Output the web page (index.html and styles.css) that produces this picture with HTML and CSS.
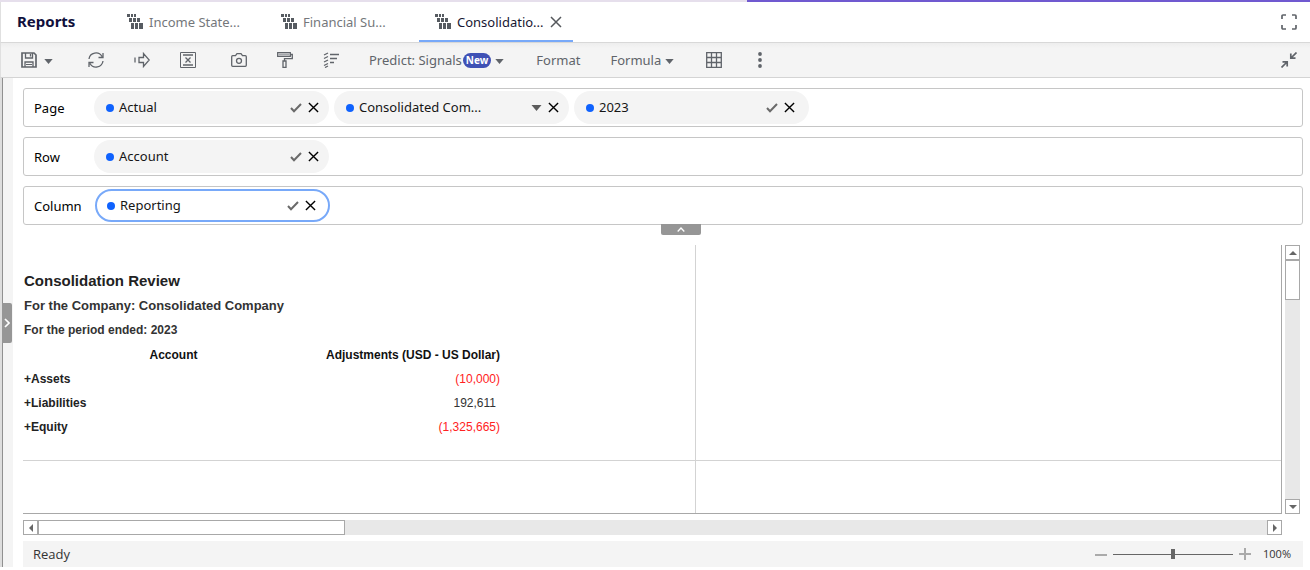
FILE: index.html
```html
<!DOCTYPE html>
<html lang="en">
<head>
<meta charset="utf-8">
<title>Reports</title>
<link rel="stylesheet" href="styles.css">
</head>
<body>
<svg class="defs" aria-hidden="true">
  <symbol id="i-report" viewBox="0 0 16 16"><path fill="currentColor" d="M0 0h3v3H0zM4 0h2v3H4zM7 0h2v3H7zM2 4h3v4H2zM6 4h3v4H6zM10 4h3v4h-3zM4 9h3v6H4zM8 9h3v6H8zM12 9h4v6h-4z"/></symbol>
  <symbol id="i-caret" viewBox="0 0 10 6"><path fill="currentColor" d="M0 0h10L5 6z"/></symbol>
  <symbol id="i-check" viewBox="0 0 12 10"><path fill="none" stroke="currentColor" stroke-width="2" d="M1 5l3 3.2L11 1"/></symbol>
  <symbol id="i-x" viewBox="0 0 12 12"><path fill="none" stroke="currentColor" stroke-width="1.5" d="M1 1l10 10M11 1L1 11"/></symbol>
</svg>
<div class="strip"><span class="strip-fill"></span></div>
<header class="header">
  <h1 class="brand">Reports</h1>
  <nav class="tabs">
    <button class="tab"><svg class="icon"><use href="#i-report"/></svg>Income State...</button>
    <button class="tab"><svg class="icon"><use href="#i-report"/></svg>Financial Su...</button>
    <button class="tab active"><svg class="icon"><use href="#i-report"/></svg>Consolidatio...<svg class="tab-close"><use href="#i-x"/></svg></button>
  </nav>
  <button class="tool end" aria-label="Full screen"><svg class="icon" viewBox="0 0 16 16"><path class="line bold" d="M1 5V2q0-1 1-1h3M11 1h3q1 0 1 1v3M15 11v3q0 1-1 1h-3M5 15H2q-1 0-1-1v-3"/></svg></button>
</header>
<div class="toolbar">
  <button class="tool save" aria-label="Save"><svg class="icon" viewBox="0 0 16 16"><path class="line bold" d="M1 1h12l2 2v12H1z"/><path class="line" d="M4.500 1v5h7V1M4 15V10h8v5M9.500 2v2.500"/><path class="line thin" d="M5 12.500h6"/></svg><svg class="caret"><use href="#i-caret"/></svg></button>
  <button class="tool" aria-label="Refresh"><svg class="icon" viewBox="0 0 16 16"><path class="line" d="M1 7A7 7 0 0 1 14 4.500M15 1v4.500h-4.500M15 9A7 7 0 0 1 2 11.500M1 15v-4.500h4.500"/></svg></button>
  <button class="tool" aria-label="Run"><svg class="icon" viewBox="0 0 16 16"><path class="line" d="M1 5.500v5M5 5.500h4.500V1.500L15.200 8l-5.700 6.500v-4H5z"/></svg></button>
  <button class="tool gap-after" aria-label="Clear sheet"><svg class="icon" viewBox="0 0 16 16"><path class="line thin" d="M.5.5h15v15H.5z"/><path class="line" d="M5.500 5.500l5 5M10.500 5.500l-5 5"/><path class="line bold" d="M3 3h10M3 13h10"/></svg></button>
  <button class="tool" aria-label="Snapshot"><svg class="icon" viewBox="0 0 16 16"><path class="line" d="M1.700 3.700H4.500l1.500-2h4l1.500 2h2.800q1 0 1 1v8.600q0 1-1 1H1.700q-1 0-1-1V4.700q0-1 1-1z"/><circle class="line" cx="8" cy="8.800" r="2.500"/></svg></button>
  <button class="tool" aria-label="Format painter"><svg class="icon" viewBox="0 0 16 16"><path class="line" d="M.7.700h12.600v3.600H.7zM13.300 2.500h2v4.200H7.500V9"/><path fill="#a4a7ab" d="M1.500 1.500h11v2h-11z"/><path class="line" d="M6 9h3v6.300H6z"/></svg></button>
  <button class="tool" aria-label="Sort"><svg class="icon" viewBox="0 0 16 16"><path class="line" d="M1 3l4-2M1 6.500l4-2M1 10l4-2M1 13.500l4-2M2 15.500l3-1.500M7 2.500h9M7 6.500h7M7 10.500h4"/></svg></button>
  <button class="tool">Predict: Signals<span class="badge">New</span><svg class="caret"><use href="#i-caret"/></svg></button>
  <button class="tool">Format</button>
  <button class="tool">Formula<svg class="caret"><use href="#i-caret"/></svg></button>
  <button class="tool" aria-label="Grid"><svg class="icon" viewBox="0 0 16 16"><path class="line" d="M.7.700h14.600v14.600H.7zM.7 5.500h14.600M.7 10.500h14.600M5.500.7v14.600M10.500.7v14.600"/></svg></button>
  <button class="tool" aria-label="More"><svg class="icon" viewBox="0 0 16 16"><g fill="currentColor"><circle cx="8" cy="2" r="1.900"/><circle cx="8" cy="8" r="1.900"/><circle cx="8" cy="14" r="1.900"/></g></svg></button>
  <button class="tool end" aria-label="Collapse"><svg class="icon" viewBox="0 0 16 16"><path class="line bold" d="M15.500.5L10 6M9.800 1.500V6.200h4.700M.5 15.500L6 10M1.500 9.800H6.200v4.700"/></svg></button>
</div>
<div class="body">
  <aside class="rail"><button class="rail-handle" aria-label="Expand panel"><svg viewBox="0 0 6 10" width="6" height="10"><path class="line bold" d="M1 1l4 4-4 4"/></svg></button></aside>
  <main class="main">
    <section class="axes">
      <div class="axis"><span class="axis-name">Page</span>
        <div class="chip"><i class="dot"></i><span class="chip-name">Actual</span><svg class="check"><use href="#i-check"/></svg><button class="remove" aria-label="Remove Actual"><svg><use href="#i-x"/></svg></button></div>
        <div class="chip"><i class="dot"></i><span class="chip-name">Consolidated Com...</span><svg class="drop"><use href="#i-caret"/></svg><button class="remove" aria-label="Remove Company"><svg><use href="#i-x"/></svg></button></div>
        <div class="chip last"><i class="dot"></i><span class="chip-name">2023</span><svg class="check"><use href="#i-check"/></svg><button class="remove" aria-label="Remove 2023"><svg><use href="#i-x"/></svg></button></div>
      </div>
      <div class="axis"><span class="axis-name">Row</span>
        <div class="chip"><i class="dot"></i><span class="chip-name">Account</span><svg class="check"><use href="#i-check"/></svg><button class="remove" aria-label="Remove Account"><svg><use href="#i-x"/></svg></button></div>
      </div>
      <div class="axis"><span class="axis-name">Column</span>
        <div class="chip selected"><i class="dot"></i><span class="chip-name">Reporting</span><svg class="check"><use href="#i-check"/></svg><button class="remove" aria-label="Remove Reporting"><svg><use href="#i-x"/></svg></button></div>
      </div>
      <button class="fold" aria-label="Collapse axes"><svg viewBox="0 0 8 5" width="8" height="5"><path class="line" d="M.7 4.500L4 1l3.300 3.500"/></svg></button>
    </section>
    <section class="sheet-area">
      <div class="sheet">
        <div class="pane report">
          <h2 class="report-title">Consolidation Review</h2>
          <p class="report-company">For the Company: Consolidated Company</p>
          <p class="report-period">For the period ended: 2023</p>
          <table class="figures">
            <thead><tr><th class="account">Account</th><th class="amount">Adjustments (USD - US Dollar)</th></tr></thead>
            <tbody>
              <tr><th scope="row">+Assets</th><td class="negative">(10,000)</td></tr>
              <tr><th scope="row">+Liabilities</th><td class="positive">192,611</td></tr>
              <tr><th scope="row">+Equity</th><td class="negative">(1,325,665)</td></tr>
            </tbody>
          </table>
        </div>
        <div class="pane"></div>
        <div class="pane low"></div>
        <div class="pane low"></div>
      </div>
      <div class="scroll vertical">
        <button class="step" aria-label="Scroll up"><svg viewBox="0 0 8 4" width="8" height="4"><path fill="currentColor" d="M4 0l4 4H0z"/></svg></button>
        <div class="thumb"></div>
        <button class="step far" aria-label="Scroll down"><svg viewBox="0 0 8 4" width="8" height="4"><path fill="currentColor" d="M0 0h8L4 4z"/></svg></button>
      </div>
      <div class="scroll horizontal">
        <button class="step" aria-label="Scroll left"><svg viewBox="0 0 4 8" width="4" height="8"><path fill="currentColor" d="M4 0v8L0 4z"/></svg></button>
        <div class="thumb"></div>
        <button class="step far" aria-label="Scroll right"><svg viewBox="0 0 4 8" width="4" height="8"><path fill="currentColor" d="M0 0l4 4-4 4z"/></svg></button>
      </div>
    </section>
    <footer class="status">
      <span class="state">Ready</span>
      <button class="zoom-step" aria-label="Zoom out"><svg viewBox="0 0 12 12" width="12" height="12"><path class="mark" d="M0 7h12"/></svg></button>
      <input class="zoom" type="range" min="0" max="200" value="100" aria-label="Zoom">
      <button class="zoom-step" aria-label="Zoom in"><svg viewBox="0 0 12 12" width="12" height="12"><path class="mark" d="M0 6h12M6 0v12"/></svg></button>
      <span class="percent">100%</span>
    </footer>
  </main>
</div>
</body>
</html>
```
FILE: styles.css
```css
* { box-sizing: border-box; }
body {
  margin: 0;
  height: 100vh;
  display: flex;
  flex-direction: column;
  padding-bottom: 3px;
  background: #fff;
  color: #161616;
  font: 13px/18px "Noto Sans", sans-serif;
}
button {
  margin: 0;
  padding: 0;
  border: 0;
  background: none;
  color: inherit;
  font: inherit;
  display: flex;
  align-items: center;
}
svg { display: block; flex: none; }
.defs { position: absolute; width: 0; height: 0; }
.icon { width: 16px; height: 16px; }
.line { fill: none; stroke: currentColor; stroke-width: 1.3; }
.line.bold { stroke-width: 1.7; }
.line.thin { stroke-width: 1; }

.strip { display: flex; justify-content: flex-end; height: 2px; background: #e6dfec; }
.strip-fill { width: 43%; background: #7059d0; }

.header {
  display: flex;
  align-items: stretch;
  height: 41px;
  padding: 0 13px 0 16px;
  border-left: 1px solid #e0e0e0;
  border-bottom: 1px solid #d8d8d8;
}
.brand { width: 94px; margin: 0; font-size: 15px; line-height: 39px; color: #10103c; }
.tabs { display: flex; }
.tab {
  width: 154px;
  padding: 2px 12px 0 16px;
  gap: 6px;
  color: #74777b;
  border-bottom: 2px solid transparent;
}
.tab .icon { color: #565b61; }
.tab.active { color: #171733; border-color: #78a9f9; }
.tab-close { width: 12px; height: 12px; margin-left: auto; color: #55585c; }

.toolbar {
  display: flex;
  align-items: center;
  gap: 30px;
  height: 35px;
  padding: 0 13px 0 20px;
  border-left: 1px solid #e0e0e0;
  border-bottom: 1px solid #d4d4d4;
  background: linear-gradient(#ededed, #f4f4f4 5px);
}
.tool { color: #60646a; }
.end { margin-left: auto; }
.gap-after { margin-right: 5px; }
.caret { width: 9px; height: 5px; margin: 2px 2px 0 4px; }
.save { margin-right: 2px; }
.save .caret { margin-left: 7px; margin-right: 3px; }
.badge {
  margin-left: 1px;
  padding: 0 3px;
  border-radius: 8px;
  background: #3f51b5;
  color: #fff;
  font-size: 10px;
  line-height: 15px;
  font-weight: 700;
}

.body { display: flex; flex: 1; min-height: 0; }
.rail {
  display: flex;
  align-items: center;
  width: 13px;
  border-left: 2px solid #ddd;
  background: #f4f4f4;
  box-shadow: inset 1px 0 #909090;
}
.rail-handle {
  width: 10px;
  height: 40px;
  justify-content: center;
  border-radius: 0 2px 2px 0;
  background: #969696;
  color: #fff;
}
.main { display: flex; flex: 1; flex-direction: column; min-width: 0; padding: 10px 7px 0 10px; }

.axes { position: relative; display: flex; flex-direction: column; gap: 10px; }
.axis {
  display: flex;
  align-items: center;
  gap: 5px;
  height: 39px;
  padding-left: 10px;
  border: 1px solid #c6c6c6;
  border-radius: 3px;
}
.axis-name { width: 55px; color: #000; }
.chip {
  display: flex;
  align-items: center;
  width: 235px;
  height: 33px;
  padding: 0 10px 0 12px;
  border-radius: 17px;
  background: #f4f4f4;
}
.chip.last { padding-right: 14px; }
.chip.selected { margin-left: 1px; padding: 0 12px 0 10px; border: 2px solid #78a9f9; background: #fff; }
.dot { width: 8px; height: 8px; margin-right: 5px; border-radius: 50%; background: #0f62fe; }
.chip-name { flex: 1; padding-bottom: 2px; }
.check { width: 12px; height: 10px; color: #6a6a6a; }
.drop { width: 11px; height: 6px; color: #5c5c5c; }
.remove { margin-left: 6px; color: #000; }
.remove svg { width: 11px; height: 11px; }
.fold {
  position: absolute;
  top: 100%;
  left: 50%;
  transform: translate(-2px, -1px);
  width: 40px;
  height: 11px;
  justify-content: center;
  border-radius: 0 0 2px 2px;
  background: #969696;
  color: #fff;
}

.sheet-area {
  display: grid;
  flex: 1;
  grid-template: 1fr 15px / 1fr 15px;
  gap: 6px 3px;
  margin: 20px 3px 6px 0;
}
.sheet {
  display: grid;
  grid-template: 216px 1fr / 673px 1fr;
  border-right: 1px solid #a8a8a8;
  border-bottom: 1px solid #a8a8a8;
}
.pane { border-right: 1px solid #d3d3d3; border-bottom: 1px solid #d3d3d3; }
.pane:nth-child(even) { border-right: 0; }
.pane.low { border-bottom: 0; }
.report { padding: 24px 0 0 1px; color: #333; font-family: "Liberation Sans", Arial, sans-serif; font-size: 12px; }
.report-title, .report-company, .report-period { margin: 0; font-weight: 700; line-height: 25px; }
.report-title { font-size: 15px; line-height: 24px; color: #222; }
.report-company { font-size: 13px; }
.figures { width: 476px; border-collapse: collapse; table-layout: fixed; }
.figures th, .figures td { height: 24px; padding: 0; line-height: 18px; text-align: right; }
.figures th[scope] { text-align: left; color: #222; }
.figures thead { color: #111; }
.figures .account { width: 299px; text-align: center; }
.figures .negative { color: #f22; }
.figures .positive { padding-right: 4px; }

.scroll { display: flex; background: #e8e8e8; }
.vertical { flex-direction: column; }
.step {
  width: 15px;
  height: 15px;
  justify-content: center;
  border: 1px solid #a8a8a8;
  background: #fff;
  color: #666;
}
.far { margin: auto 0 0; }
.horizontal .far { margin: 0 0 0 auto; }
.thumb { border: 1px solid #a8a8a8; background: #fff; }
.vertical .thumb { height: 40px; }
.horizontal .thumb { width: 307px; }

.status {
  display: flex;
  align-items: center;
  gap: 6px;
  height: 26px;
  padding: 0 12px 0 10px;
  background: #f4f4f4;
  color: #333;
  font-family: "Open Sans", sans-serif;
}
.state { flex: 1; }
.mark { fill: none; stroke: #aaa; stroke-width: 2; }
.zoom { width: 120px; height: 12px; margin: 0; appearance: none; background: linear-gradient(#666, #666) center / 100% 1px no-repeat; }
.zoom::-webkit-slider-thumb { appearance: none; width: 4px; height: 10px; background: #666; }
.percent { margin-left: 6px; font-size: 11px; }
```
